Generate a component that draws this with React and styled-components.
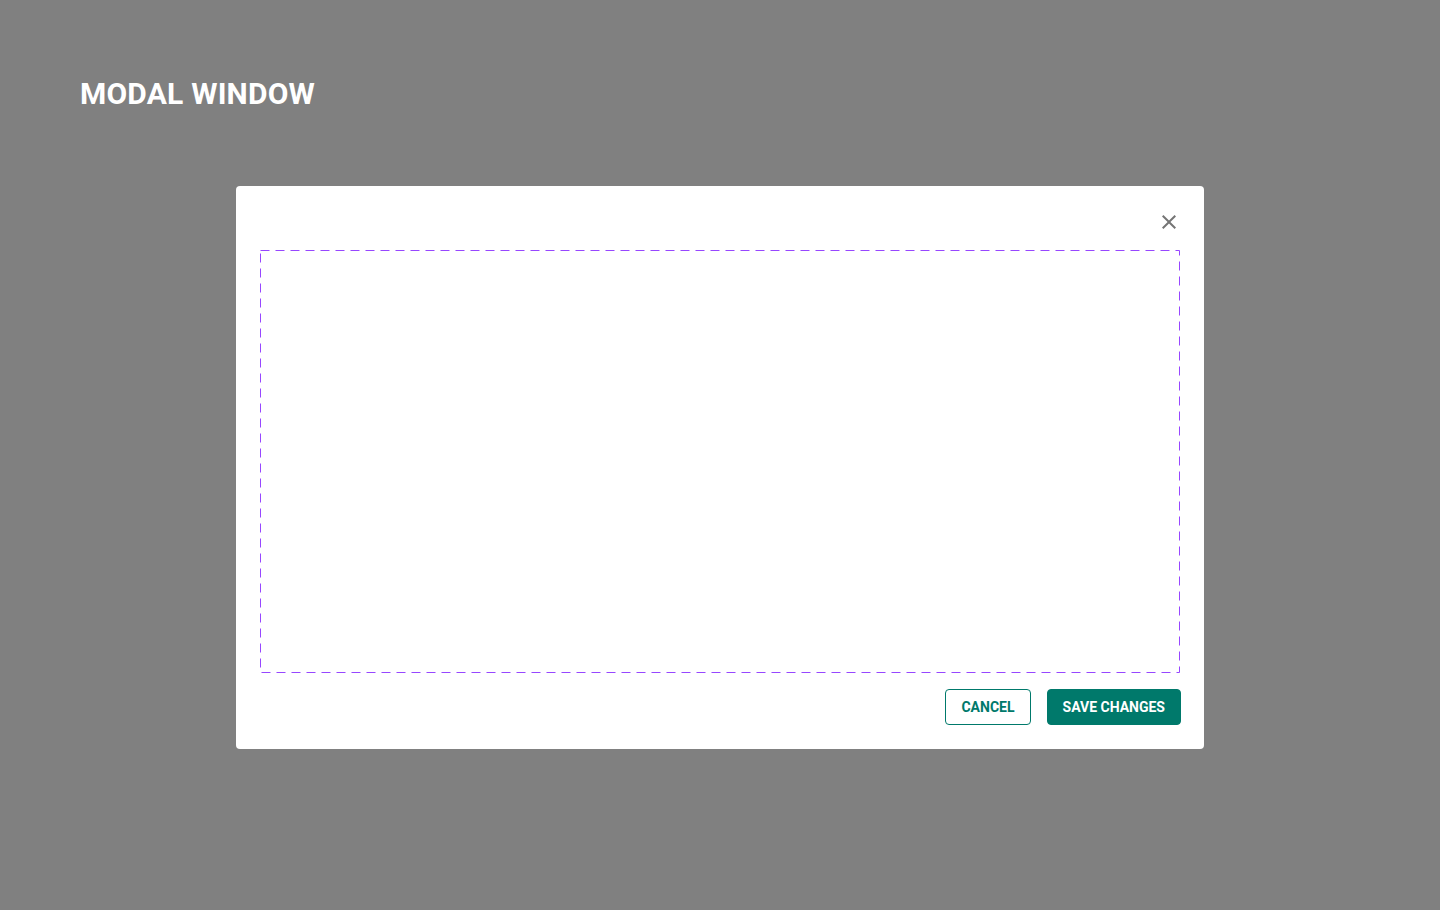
import React from 'react';
import styled, { createGlobalStyle } from 'styled-components';

const GlobalStyle = createGlobalStyle`
  html, body {
    margin: 0;
    padding: 0;
    background-color: #808080;
    font-family: Roboto, "Liberation Sans", sans-serif;
  }
`;

const dashedBorder = encodeURIComponent(
  '<svg xmlns="http://www.w3.org/2000/svg" width="100%" height="100%">' +
    '<rect x="0.5" y="0.5" width="calc(100% - 1px)" height="calc(100% - 1px)" fill="none" stroke="#9747FF" stroke-width="1" stroke-dasharray="9 6"/>' +
  '</svg>'
);

const Page = styled.div`
  min-height: 910px;
  box-sizing: border-box;
  padding: 77px 80px 0;
`;

const Title = styled.h1`
  margin: 0 0 75px;
  color: #ffffff;
  font-size: 30px;
  line-height: 34px;
  font-weight: 700;
  letter-spacing: 0.2px;
`;

const Modal = styled.div`
  width: 968px;
  margin: 0 auto;
  box-sizing: border-box;
  background-color: #ffffff;
  border-radius: 4px;
  padding: 24px;
  display: flex;
  flex-direction: column;
  gap: 16px;
`;

const ModalHeader = styled.div`
  display: flex;
  justify-content: flex-end;
  height: 24px;
  margin-right: -1px;
`;

const CloseButton = styled.button`
  width: 24px;
  height: 24px;
  padding: 0;
  border: none;
  background: none;
  color: #757575;
  cursor: pointer;
  display: flex;
  align-items: center;
  justify-content: center;
`;

const Slot = styled.div`
  height: 423px;
  background-image: url("data:image/svg+xml,${dashedBorder}");
  background-repeat: no-repeat;
`;

const Footer = styled.div`
  display: flex;
  justify-content: flex-end;
  gap: 16px;
  margin-right: -1px;
`;

const Button = styled.button`
  height: 36px;
  box-sizing: border-box;
  padding: 0 15px;
  border-radius: 4px;
  font-family: Roboto, "Liberation Sans", sans-serif;
  font-size: 14px;
  font-weight: 700;
  letter-spacing: 0;
  text-transform: uppercase;
  cursor: pointer;
  border: 1px solid #00796b;
  background-color: ${props => (props.primary ? '#00796b' : '#ffffff')};
  color: ${props => (props.primary ? '#ffffff' : '#00796b')};
`;

function CloseIcon() {
  return (
    <svg width="24" height="24" viewBox="0 0 24 24" fill="currentColor">
      <path d="M19 6.41 17.59 5 12 10.59 6.41 5 5 6.41 10.59 12 5 17.59 6.41 19 12 13.41 17.59 19 19 17.59 13.41 12z" />
    </svg>
  );
}

function App() {
  return (
    <Page>
      <GlobalStyle />
      <Title>MODAL WINDOW</Title>
      <Modal>
        <ModalHeader>
          <CloseButton aria-label="Close">
            <CloseIcon />
          </CloseButton>
        </ModalHeader>
        <Slot />
        <Footer>
          <Button>Cancel</Button>
          <Button primary>Save changes</Button>
        </Footer>
      </Modal>
    </Page>
  );
}

export default App;
